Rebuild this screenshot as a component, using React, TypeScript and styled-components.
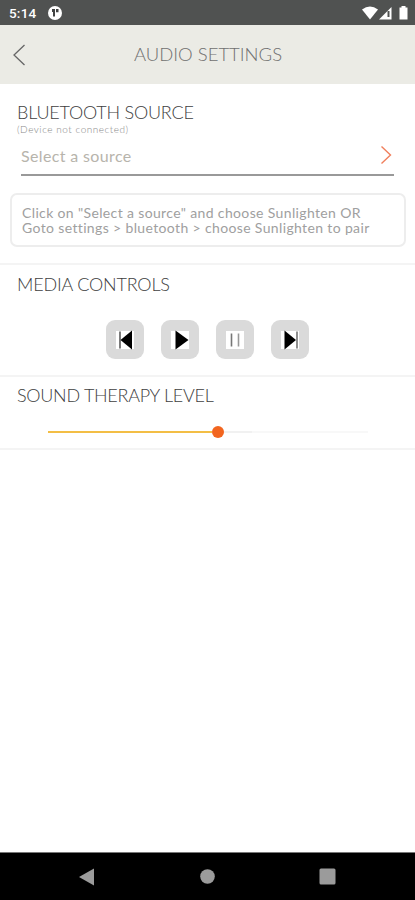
import React from "react";
import styled, { createGlobalStyle } from "styled-components";

const GlobalStyle = createGlobalStyle`
  * { box-sizing: border-box; }
  body { margin: 0; background: #fff; }
`;

const Screen = styled.div`
  display: flex;
  flex-direction: column;
  width: 415px;
  height: 900px;
  overflow: hidden;
  background: #fff;
  font-family: Lato, "Open Sans", sans-serif;
  font-weight: 300;
  white-space: nowrap;
`;

const StatusBar = styled.div`
  display: flex;
  align-items: center;
  height: 25px;
  padding: 1px 7px 0 9px;
  background: #505251;
  color: #fff;
`;

const Clock = styled.span`
  width: 39px;
  font: 500 13.5px/24px Roboto, sans-serif;
  letter-spacing: 0.2px;
`;

const StatusIcons = styled.svg`
  margin-left: auto;
`;

const Header = styled.header`
  display: grid;
  grid-template-columns: 40px 1fr 40px;
  align-items: center;
  height: 59px;
  padding: 0 0 1px 1px;
  background: #ebebe5;
`;

const BackButton = styled.button`
  display: flex;
  padding: 2px 0 0 11px;
  border: 0;
  background: none;
`;

const Title = styled.h1`
  margin: 0;
  color: #707070;
  font-size: 18.5px;
  font-weight: 300;
  line-height: 24px;
  text-align: center;
`;

const Section = styled.section<{ $height: number }>`
  display: flex;
  flex-direction: column;
  height: ${(p) => p.$height}px;
  border-bottom: 2px solid #f4f4f4;
`;

const Heading = styled.h2<{ $top: number; $spacing: number }>`
  margin: ${(p) => p.$top}px 0 0 17px;
  color: #404040;
  font-size: 18px;
  font-weight: 300;
  line-height: 22px;
  letter-spacing: ${(p) => p.$spacing}px;
`;

const DeviceState = styled.div`
  margin-left: 17px;
  color: #888;
  font-size: 10px;
  line-height: 12px;
  letter-spacing: 0.53px;
`;

const SourcePicker = styled.button`
  display: flex;
  align-items: center;
  justify-content: space-between;
  height: 40px;
  margin: 1px 21px 0;
  padding: 0 2px 0 0;
  border: 0;
  border-bottom: 2px solid #999;
  background: none;
  color: #b7b4ac;
  font: inherit;
  font-size: 16px;
  font-weight: 400;
  letter-spacing: 0.36px;
`;

const Hint = styled.div`
  height: 54px;
  margin: 17px 9px 0 10px;
  padding: 11px 10px 0;
  border: 2px solid #ededed;
  border-radius: 7px;
  color: #a0a0a0;
  font-size: 14px;
  font-weight: 400;
  line-height: 14.5px;
  letter-spacing: 0.36px;
`;

const Controls = styled.div`
  display: flex;
  gap: 17px;
  margin: 25px 0 0 106px;
`;

const ControlButton = styled.button`
  display: flex;
  align-items: center;
  justify-content: center;
  width: 38px;
  height: 39px;
  padding: 0;
  border: 0;
  border-radius: 9px;
  background: #dadada;
`;

const Slider = styled.div`
  display: flex;
  align-items: center;
  width: 320px;
  height: 12px;
  margin: 20px 0 0 48px;
`;

const Filled = styled.div`
  width: 164px;
  height: 2px;
  background: #f3be45;
`;

const Thumb = styled.div`
  width: 12px;
  height: 12px;
  border-radius: 50%;
  background: #f2651f;
`;

const Remaining = styled.div`
  flex: 1;
  height: 2px;
  background: linear-gradient(90deg, #f1f1f1 28px, #f8f8f8 28px);
`;

const NavBar = styled.nav`
  display: flex;
  align-items: center;
  justify-content: space-between;
  height: 48px;
  margin-top: auto;
  padding: 0 79px;
  border-top: 1px solid #777;
  background: #000;
`;

type MediaKind = "previous" | "play" | "pause" | "next";

function MediaIcon({ kind }: { kind: MediaKind }) {
  return (
    <svg width="20" height="20" viewBox="0 0 20 20">
      <rect x="1" y="1" width="18" height="18" fill="#fff" />
      {kind === "previous" && (
        <>
          <path d="M5 1.5v17" stroke="#222" strokeWidth="1.2" />
          <path d="M17 .5v19L5.5 10z" />
        </>
      )}
      {kind === "play" && <path d="M5.5 .5v19L18.5 10z" />}
      {kind === "pause" && (
        <>
          <path d="M6.5 3.5v13" stroke="#777" strokeWidth="1.6" />
          <path d="M13.5 3.5v13" stroke="#999" strokeWidth="1.6" />
        </>
      )}
      {kind === "next" && (
        <>
          <path d="M4.5 .5v19L16 10z" />
          <path d="M17 1.5v17" stroke="#444" strokeWidth="1.2" />
        </>
      )}
    </svg>
  );
}

const mediaKinds: MediaKind[] = ["previous", "play", "pause", "next"];

export default function App() {
  return (
    <Screen>
      <GlobalStyle />
      <StatusBar>
        <Clock>5:14</Clock>
        <svg width="14" height="14" viewBox="0 0 14 14">
          <circle cx="7" cy="7" r="7" fill="#fff" />
          <path d="M4 3h3v7.5H5V6H4zM8 3h2.5v3.2H8z" fill="#414342" />
        </svg>
        <StatusIcons width="46" height="16" viewBox="0 0 46 16" fill="#fff">
          <path d="M0 4.5Q8-1.5 16 4.5L8 14.5z" />
          <path d="M17 14.5 29.5 2v12.5z" />
          <path d="M26.5 6v6" stroke="#505251" strokeWidth="2" />
          <path d="M39.5 1h4v1.5h2v12h-8v-12h2z" />
        </StatusIcons>
      </StatusBar>
      <Header>
        <BackButton aria-label="Back">
          <svg width="14" height="22" viewBox="0 0 14 22" fill="none">
            <path d="M12.5 1 2 11l10.5 10" stroke="#666" strokeWidth="1.3" />
          </svg>
        </BackButton>
        <Title>AUDIO SETTINGS</Title>
      </Header>
      <Section $height={181}>
        <Heading $top={17} $spacing={-0.22}>BLUETOOTH SOURCE</Heading>
        <DeviceState>(Device not connected)</DeviceState>
        <SourcePicker>
          <span>Select a source</span>
          <svg width="12" height="20" viewBox="0 0 12 20" fill="none">
            <path d="m1.5 1.5 9 8.5-9 8.5" stroke="#f07f5c" strokeWidth="1.4" />
          </svg>
        </SourcePicker>
        <Hint>
          <div>Click on "Select a source" and choose Sunlighten OR</div>
          <div>Goto settings &gt; bluetooth &gt; choose Sunlighten to pair</div>
        </Hint>
      </Section>
      <Section $height={112}>
        <Heading $top={8} $spacing={-0.18}>MEDIA CONTROLS</Heading>
        <Controls>
          {mediaKinds.map((kind) => (
            <ControlButton key={kind} aria-label={kind}>
              <MediaIcon kind={kind} />
            </ControlButton>
          ))}
        </Controls>
      </Section>
      <Section $height={73}>
        <Heading $top={7} $spacing={-0.28}>SOUND THERAPY LEVEL</Heading>
        <Slider>
          <Filled />
          <Thumb />
          <Remaining />
        </Slider>
      </Section>
      <NavBar>
        <svg width="16" height="18" viewBox="0 0 16 18">
          <path d="M0 9 15 .5v17z" fill="#9b9b9b" />
        </svg>
        <svg width="15" height="15" viewBox="0 0 15 15">
          <circle cx="7.5" cy="7.5" r="7.3" fill="#9b9b9b" />
        </svg>
        <svg width="17" height="17" viewBox="0 0 17 17">
          <rect x=".5" y=".5" width="16" height="16" rx="1.5" fill="#9b9b9b" />
        </svg>
      </NavBar>
    </Screen>
  );
}
